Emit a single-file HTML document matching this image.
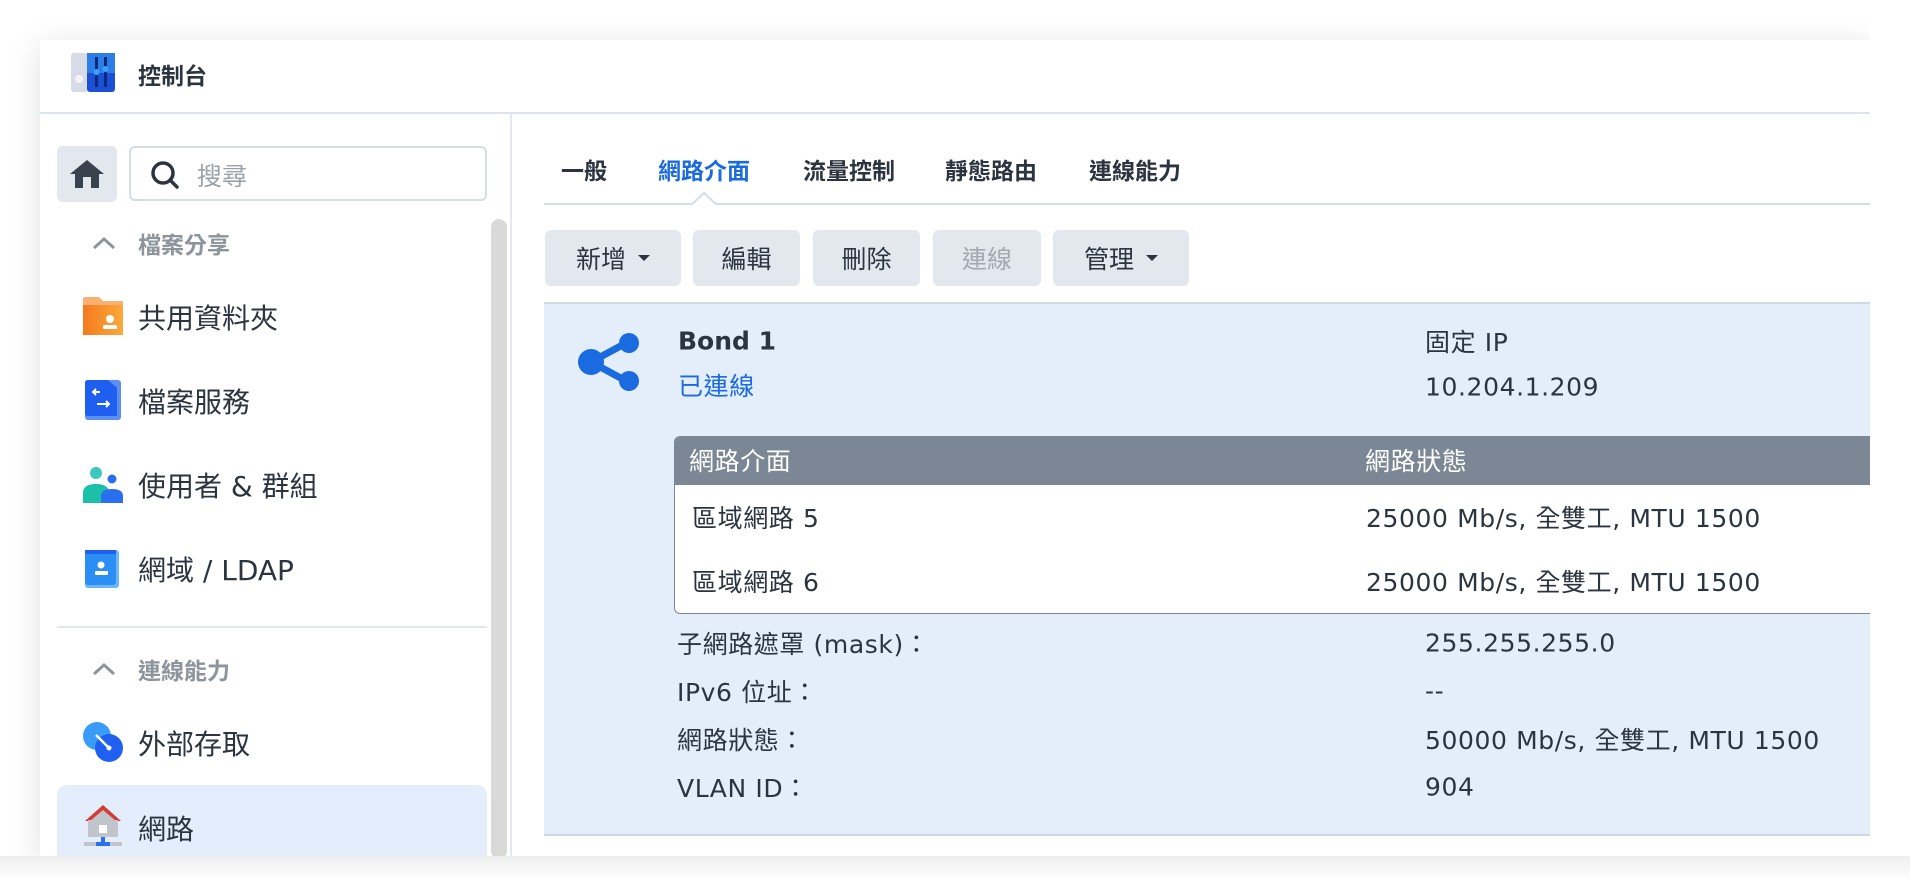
<!DOCTYPE html>
<html><head><meta charset="utf-8"><style>
*{margin:0;padding:0;box-sizing:border-box}
body{width:1910px;height:896px;background:#fff;position:relative;overflow:hidden;font-family:"DejaVu Sans","Noto Sans CJK TC",sans-serif;color:#2c3440}
.a{position:absolute;white-space:nowrap}
.win{position:absolute;left:40px;top:40px;width:1830px;height:816px;background:#fff;box-shadow:0 6px 30px rgba(0,0,0,.13);overflow:hidden}
.v{transform:translateY(-50%)}
.si{font-size:28px;color:#2c3440}
.sec{font-size:23px;color:#8e949c;font-weight:bold}
.tab{font-size:23px;font-weight:bold;color:#2c3440}
.btn{position:absolute;top:230px;height:56px;background:#e3e8ef;border-radius:6px;font-size:25px;display:flex;align-items:center;justify-content:center;color:#2c3440}
.car{display:inline-block;width:0;height:0;border-left:6px solid transparent;border-right:6px solid transparent;border-top:6px solid #2c3440;margin-left:12px}
.t{font-size:25px;letter-spacing:0.6px;color:#2c3440}
</style></head><body>
<div class="win"></div>
<div class="a" style="left:40px;top:112px;width:1830px;height:2px;background:#dde4ec"></div>
<svg class="a" style="left:71px;top:53px" width="44" height="40" viewBox="0 0 44 40">
<rect x="0" y="0" width="17" height="39" rx="3" fill="#d7dbe8"/>
<rect x="16" y="0" width="28" height="39" rx="3" fill="#1a4fd6"/>
<rect x="16" y="0" width="28" height="20" fill="#2d7de8"/>
<circle cx="8" cy="26" r="4" fill="#f4f4f8"/>
<rect x="24" y="4" width="3" height="30" fill="#0b2a78"/><rect x="33" y="4" width="3" height="30" fill="#0b2a78"/>
<circle cx="25.5" cy="19" r="3" fill="#3da0ff"/><circle cx="34.5" cy="16" r="3" fill="#3da0ff"/>
</svg>
<div class="a v" style="left:138px;top:74px;font-size:23px;font-weight:bold">控制台</div>
<div class="a" style="left:510px;top:113px;width:2px;height:743px;background:#e3e8ef"></div>
<div class="a" style="left:57px;top:146px;width:60px;height:56px;background:#e3e8ef;border-radius:6px"></div>
<svg class="a" style="left:70px;top:160px" width="34" height="28" viewBox="0 0 34 28"><path d="M17 0 L34 14 H29 V28 H5 V14 H0 Z" fill="#3a424d"/><rect x="13" y="17" width="8" height="11" fill="#e3e8ef"/></svg>
<div class="a" style="left:129px;top:146px;width:358px;height:55px;border:2px solid #d5dce6;border-radius:6px"></div>
<svg class="a" style="left:150px;top:160px" width="30" height="30" viewBox="0 0 30 30"><circle cx="13" cy="13" r="10" fill="none" stroke="#2c3440" stroke-width="3.5"/><path d="M20 20 L27 27" stroke="#2c3440" stroke-width="3.5" stroke-linecap="round"/></svg>
<div class="a v" style="left:197px;top:175px;font-size:25px;color:#9ca2aa">搜尋</div>
<div class="a" style="left:491px;top:219px;width:16px;height:640px;background:#d9d9d9;border-radius:8px"></div>
<svg class="a" style="left:92px;top:235px" width="24" height="16"><path d="M2 13 L12 4 L22 13" fill="none" stroke="#8e949c" stroke-width="3"/></svg>
<div class="a v sec" style="left:138px;top:243px">檔案分享</div>
<svg class="a" style="left:83px;top:297px" width="40" height="38" viewBox="0 0 40 38"><defs><linearGradient id="o" x1="0" x2="1"><stop offset="0" stop-color="#f47a1f"/><stop offset="1" stop-color="#fba93a"/></linearGradient></defs><path d="M0 2 Q0 0 2 0 H16 L20 4 H40 V38 H0Z" fill="#f9b070"/><rect x="0" y="8" width="40" height="30" fill="url(#o)"/><circle cx="27" cy="22" r="4" fill="#fff"/><rect x="20" y="28" width="14" height="4" rx="1" fill="#fff"/></svg>
<div class="a v si" style="left:138px;top:317px">共用資料夾</div>
<svg class="a" style="left:85px;top:380px" width="36" height="40" viewBox="0 0 36 40"><rect x="0" y="0" width="36" height="40" rx="3" fill="#5b8ff5"/><path d="M0 3 Q0 0 3 0 H23 L32 8 V36 H3 Q0 36 0 33Z" fill="#1e5ef0"/><path d="M15 12 H8 M11 9 L8 12 L11 15 M12 24 H24 M21 21 L24 24 L21 27" stroke="#fff" stroke-width="2" fill="none"/></svg>
<div class="a v si" style="left:138px;top:401px">檔案服務</div>
<svg class="a" style="left:83px;top:467px" width="40" height="36" viewBox="0 0 40 36"><circle cx="13" cy="6" r="6" fill="#3cc8c0"/><path d="M0 36 V26 Q0 17 13 17 Q26 17 26 26 V36Z" fill="#1cbfa8"/><circle cx="29" cy="12" r="4.5" fill="#2a6ff0"/><path d="M18 36 V29 Q18 22 29 22 Q40 22 40 29 V36Z" fill="#2a6ff0"/></svg>
<div class="a v si" style="left:138px;top:485px">使用者 &amp; 群組</div>
<svg class="a" style="left:85px;top:550px" width="35" height="38" viewBox="0 0 35 38"><rect x="0" y="0" width="34" height="38" rx="3" fill="#6bb6ff"/><rect x="0" y="0" width="31" height="35" rx="3" fill="#2a8ef5"/><rect x="0" y="0" width="31" height="4" fill="#1e5ef0"/><circle cx="16" cy="15" r="3.5" fill="#fff"/><rect x="10" y="21" width="13" height="4" rx="1" fill="#fff"/></svg>
<div class="a v si" style="left:138px;top:569px">網域 / LDAP</div>
<div class="a" style="left:57px;top:626px;width:430px;height:2px;background:#e3e8ef"></div>
<svg class="a" style="left:92px;top:661px" width="24" height="16"><path d="M2 13 L12 4 L22 13" fill="none" stroke="#8e949c" stroke-width="3"/></svg>
<div class="a v sec" style="left:138px;top:669px">連線能力</div>
<svg class="a" style="left:83px;top:722px" width="40" height="40" viewBox="0 0 40 40"><circle cx="14" cy="14" r="14" fill="#3a9cf8"/><circle cx="26" cy="26" r="14" fill="#2060f0"/><path d="M13 13 L26 26" stroke="#fff" stroke-width="2.5"/><circle cx="26" cy="26" r="2.5" fill="#fff"/></svg>
<div class="a v si" style="left:138px;top:743px">外部存取</div>
<div class="a" style="left:57px;top:785px;width:430px;height:80px;background:#e3edfb;border-radius:10px"></div>
<svg class="a" style="left:84px;top:804px" width="38" height="44" viewBox="0 0 38 44"><path d="M19 1 L37 17 H1Z" fill="#d43b32"/><rect x="4" y="16" width="30" height="17" fill="#c1c5cb"/><path d="M6 17 L19 6 L32 17Z" fill="#c1c5cb"/><rect x="15" y="21" width="8" height="8" fill="#fff"/><rect x="0" y="38" width="38" height="4" fill="#c1c5cb"/><rect x="17" y="33" width="4" height="7" fill="#2a6ff0"/><rect x="12" y="38" width="14" height="4" fill="#2a6ff0"/></svg>
<div class="a v si" style="left:138px;top:828px">網路</div>
<div class="a v tab" style="left:561px;top:169px">一般</div>
<div class="a v tab" style="left:658px;top:169px;color:#1a6ae0">網路介面</div>
<div class="a v tab" style="left:803px;top:169px">流量控制</div>
<div class="a v tab" style="left:945px;top:169px">靜態路由</div>
<div class="a v tab" style="left:1089px;top:169px">連線能力</div>
<div class="a" style="left:544px;top:203px;width:1326px;height:2px;background:#d5dce6"></div>
<svg class="a" style="left:691px;top:192px" width="26" height="14"><path d="M0 13 L13 1 L26 13" fill="#fff" stroke="#d5dce6" stroke-width="2"/></svg>
<div class="btn" style="left:545px;width:136px">新增<span class="car"></span></div>
<div class="btn" style="left:693px;width:107px">編輯</div>
<div class="btn" style="left:813px;width:107px">刪除</div>
<div class="btn" style="left:933px;width:108px;color:#a3a9b1">連線</div>
<div class="btn" style="left:1053px;width:136px">管理<span class="car"></span></div>
<div class="a" style="left:544px;top:302px;width:1326px;height:534px;background:#e3eefa;border-top:2px solid #cfd8e3;border-bottom:2px solid #cfd8e3"></div>
<svg class="a" style="left:577px;top:332px" width="64" height="60" viewBox="0 0 64 60"><path d="M14 30 L51 10 M14 30 L51 50" stroke="#1a6ae0" stroke-width="7"/><circle cx="14" cy="30" r="13" fill="#1a6ae0"/><circle cx="52" cy="11" r="10" fill="#1a6ae0"/><circle cx="52" cy="49" r="10" fill="#1a6ae0"/></svg>
<div class="a v" style="left:678px;top:341px;font-size:25px;font-weight:bold">Bond 1</div>
<div class="a v t" style="left:678px;top:385px;color:#1a6ae0">已連線</div>
<div class="a v t" style="left:1425px;top:341px">固定 IP</div>
<div class="a v t" style="left:1425px;top:387px">10.204.1.209</div>
<div class="a" style="left:674px;top:436px;width:1210px;height:178px;background:#fff;border:1.5px solid #7b8794;border-radius:6px;overflow:hidden"><div style="height:48px;background:#7b8794"></div></div>
<div class="a v t" style="left:689px;top:460px;color:#fff">網路介面</div>
<div class="a v t" style="left:1365px;top:460px;color:#fff">網路狀態</div>
<div class="a v t" style="left:692px;top:517px">區域網路 5</div>
<div class="a v t" style="left:1366px;top:517px">25000 Mb/s, 全雙工, MTU 1500</div>
<div class="a v t" style="left:692px;top:581px">區域網路 6</div>
<div class="a v t" style="left:1366px;top:581px">25000 Mb/s, 全雙工, MTU 1500</div>
<div class="a v t" style="left:677px;top:643px">子網路遮罩 (mask)：</div>
<div class="a v t" style="left:1425px;top:643px">255.255.255.0</div>
<div class="a v t" style="left:677px;top:691px">IPv6 位址：</div>
<div class="a v t" style="left:1425px;top:691px">--</div>
<div class="a v t" style="left:677px;top:739px">網路狀態：</div>
<div class="a v t" style="left:1425px;top:739px">50000 Mb/s, 全雙工, MTU 1500</div>
<div class="a v t" style="left:677px;top:787px">VLAN ID：</div>
<div class="a v t" style="left:1425px;top:787px">904</div>
<div class="a" style="left:1870px;top:0;width:40px;height:896px;background:#fff"></div>
<div class="a" style="left:0;top:856px;width:1910px;height:40px;background:linear-gradient(#eee,#fff 60%)"></div>
</body></html>
